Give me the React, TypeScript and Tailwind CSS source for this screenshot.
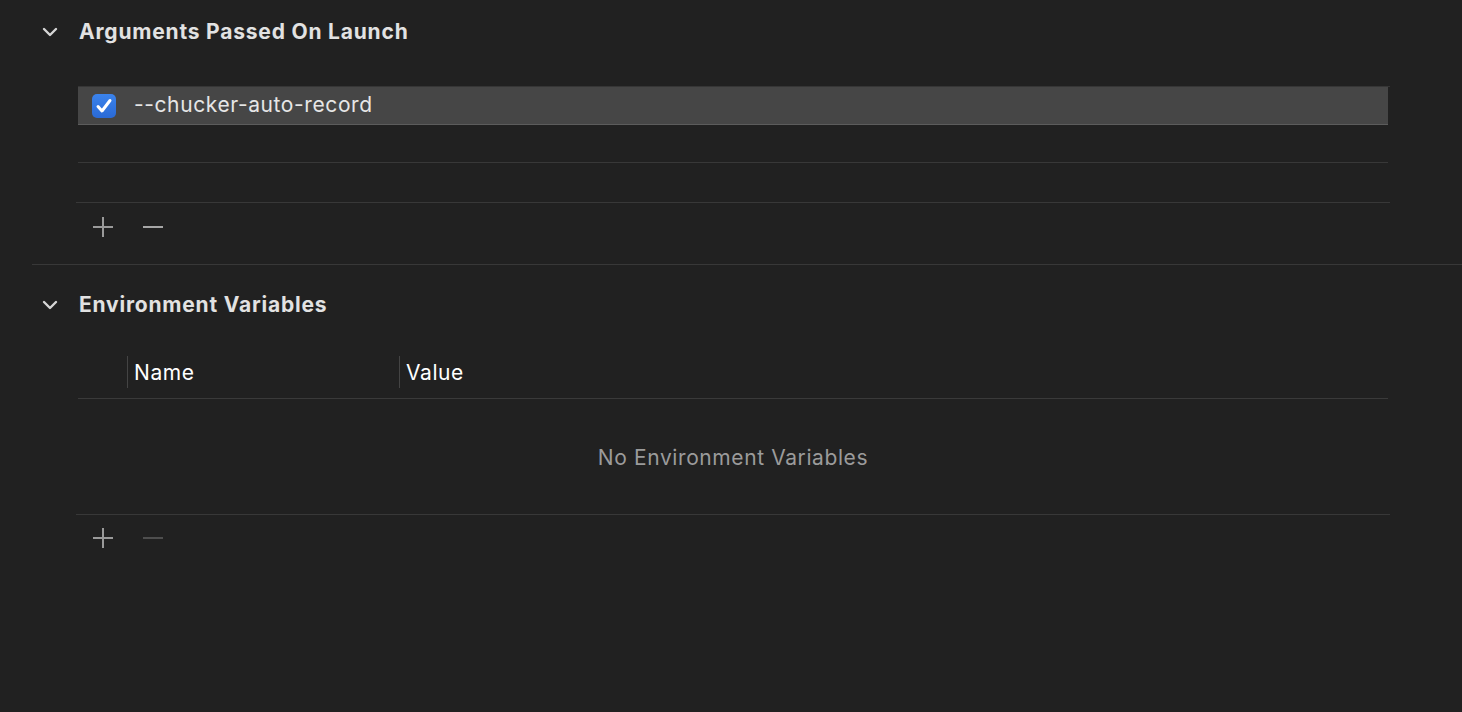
import React from 'react';

const Chevron = () => (
  <svg width="16" height="10" viewBox="0 0 16 10" className="shrink-0">
    <path d="M2 2 L8 8 L14 2" fill="none" stroke="#d6d6d6" strokeWidth="2.4" strokeLinecap="round" strokeLinejoin="round" />
  </svg>
);

const PlusMinus = ({ minusDisabled }: { minusDisabled?: boolean }) => (
  <div className="flex items-center gap-[30px] pl-[15px]">
    <svg width="20" height="20" viewBox="0 0 20 20">
      <path d="M10 0 V20 M0 10 H20" stroke="#9a9a9a" strokeWidth="2" />
    </svg>
    <svg width="20" height="20" viewBox="0 0 20 20">
      <path d="M0 10 H20" stroke={minusDisabled ? '#4e4e4e' : '#a6a6a6'} strokeWidth="2" />
    </svg>
  </div>
);

const SectionHeader = ({ title }: { title: string }) => (
  <div className="flex items-center h-10 pl-[10px]">
    <Chevron />
    <span className="ml-[21px] text-[21px] font-bold text-[#e2e2e2] tracking-[0.8px]">{title}</span>
  </div>
);

export default function App() {
  return (
    <div className="w-full h-[712px] overflow-hidden bg-[#212121] font-['Inter',sans-serif]">
      {/* Arguments */}
      <div className="pl-8 pt-3">
        <SectionHeader title="Arguments Passed On Launch" />
      </div>

      <div className="ml-[78px] w-[1312px] mt-[34px]">
        <div className="h-px bg-[#363636]" />
        <div className="w-[1310px] h-[38px] bg-[#464646] border-b border-[#5c5c5c] flex items-center pl-[14px]">
          <div className="w-6 h-6 rounded-[5px] bg-gradient-to-b from-[#3b83ec] to-[#2a6ad6] flex items-center justify-center">
            <svg width="24" height="24" viewBox="0 0 24 24">
              <path d="M6 12.5 L10 17 L18 6.5" fill="none" stroke="#fff" strokeWidth="3" strokeLinecap="round" strokeLinejoin="round" />
            </svg>
          </div>
          <span className="ml-[18px] -mt-[2px] text-[21px] tracking-[0.6px] text-[#e6e6e6]">--chucker-auto-record</span>
        </div>
        <div className="w-[1310px] h-[38px] border-b border-[#383838]" />
        <div className="h-[39px]" />
      </div>
      <div className="ml-[76px] w-[1314px] h-px bg-[#383838]" />
      <div className="ml-[78px] h-[48px] flex items-center">
        <PlusMinus />
      </div>

      <div className="ml-8 mt-[13px] h-px bg-[#383838]" />

      {/* Environment */}
      <div className="pl-8 pt-5">
        <SectionHeader title="Environment Variables" />
      </div>

      <div className="ml-[78px] w-[1310px] mt-[30px]">
        <div className="flex items-center h-[34px]">
          <div className="w-[49px]" />
          <div className="w-px h-8 bg-[#444]" />
          <span className="ml-[6px] mt-[2px] w-[265px] text-[21px] tracking-[0.6px] text-white">Name</span>
          <div className="w-px h-8 bg-[#444]" />
          <span className="ml-[6px] mt-[2px] text-[21px] tracking-[0.6px] text-white">Value</span>
        </div>
        <div className="mt-[9px] h-px bg-[#3a3a3a]" />
        <div className="h-[115px] flex items-center justify-center">
          <span className="mt-[2px] text-[21px] tracking-[0.6px] text-[#9b9b9b]">No Environment Variables</span>
        </div>
      </div>
      <div className="ml-[76px] w-[1314px] h-px bg-[#383838]" />
      <div className="ml-[78px] h-[46px] flex items-center">
        <PlusMinus minusDisabled />
      </div>
    </div>
  );
}
